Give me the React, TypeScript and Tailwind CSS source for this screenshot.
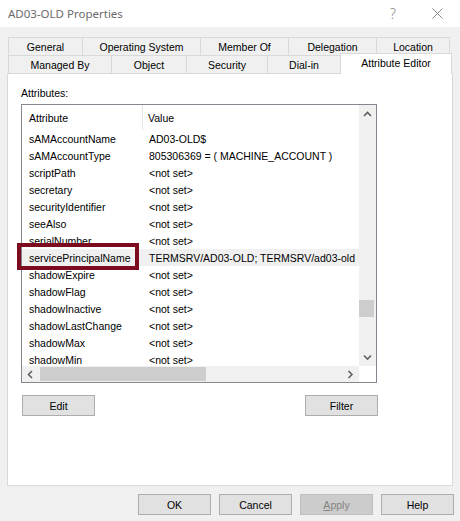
import React from 'react';

const rows: [string, string][] = [
  ['sAMAccountName', 'AD03-OLD$'],
  ['sAMAccountType', '805306369 = ( MACHINE_ACCOUNT )'],
  ['scriptPath', '<not set>'],
  ['secretary', '<not set>'],
  ['securityIdentifier', '<not set>'],
  ['seeAlso', '<not set>'],
  ['serialNumber', '<not set>'],
  ['servicePrincipalName', 'TERMSRV/AD03-OLD; TERMSRV/ad03-old'],
  ['shadowExpire', '<not set>'],
  ['shadowFlag', '<not set>'],
  ['shadowInactive', '<not set>'],
  ['shadowLastChange', '<not set>'],
  ['shadowMax', '<not set>'],
  ['shadowMin', '<not set>'],
];

const topTabs = [
  { label: 'General', w: 'w-[74px]' },
  { label: 'Operating System', w: 'w-[118px]' },
  { label: 'Member Of', w: 'w-[88px]' },
  { label: 'Delegation', w: 'w-[88px]' },
  { label: 'Location', w: 'w-[74px]' },
];

const bottomTabs = [
  { label: 'Managed By', w: 'w-[103px]' },
  { label: 'Object', w: 'w-[75px]' },
  { label: 'Security', w: 'w-[81px]' },
  { label: 'Dial-in', w: 'w-[73px]' },
];

const Chevron = ({ dir }: { dir: 'up' | 'down' | 'left' | 'right' }) => {
  const paths = {
    up: 'M1 5 L4.5 1.5 L8 5',
    down: 'M1 1.5 L4.5 5 L8 1.5',
    left: 'M5 1 L1.5 4.5 L5 8',
    right: 'M1.5 1 L5 4.5 L1.5 8',
  };
  const size = dir === 'up' || dir === 'down' ? { w: 9, h: 7 } : { w: 7, h: 9 };
  return (
    <svg width={size.w} height={size.h} viewBox={`0 0 ${size.w} ${size.h}`}>
      <path d={paths[dir]} fill="none" stroke="#606060" strokeWidth="1.6" />
    </svg>
  );
};

const WinButton = ({ label, disabled }: { label: React.ReactNode; disabled?: boolean }) => (
  <div
    className={`w-[73px] h-[21px] flex items-center justify-center border ${
      disabled ? 'bg-[#cccccc] border-[#bfbfbf] text-[#838383]' : 'bg-[#e1e1e1] border-[#adadad] text-black'
    }`}
  >
    {label}
  </div>
);

export default function App() {
  return (
    <div className="relative w-[460px] h-[521px] bg-[#f0f0f0] overflow-hidden text-[10.5px] leading-[12px] text-black font-['Liberation_Sans',Arial,sans-serif]">
      {/* title bar */}
      <div className="h-[27px] bg-white flex items-center">
        <span className="pl-[8px] text-[11.5px] text-[#6b6b6b] font-['Noto_Sans',sans-serif]">AD03-OLD Properties</span>
        <span className="ml-auto mr-[36px] text-[14px] text-[#8a8a8a] font-['Noto_Sans',sans-serif] font-light">?</span>
        <svg width="11" height="11" viewBox="0 0 11 11" className="mr-[17px]">
          <path d="M0.5 0.5 L10.5 10.5 M10.5 0.5 L0.5 10.5" stroke="#8a8a8a" strokeWidth="1" />
        </svg>
      </div>

      <div className="pl-[7px] pt-[10px]">
        {/* tabs */}
        <div className="ml-px">
          <div className="flex h-[18px]">
            {topTabs.map((t, i) => (
              <div
                key={t.label}
                className={`${t.w} flex items-center justify-center border-t border-l border-[#d9d9d9] ${
                  i === topTabs.length - 1 ? 'border-r' : ''
                }`}
              >
                {t.label}
              </div>
            ))}
          </div>
          <div className="flex h-[18px] items-end">
            {bottomTabs.map((t) => (
              <div
                key={t.label}
                className={`${t.w} h-[18px] flex items-center justify-center border-t border-l border-[#d9d9d9]`}
              >
                {t.label}
              </div>
            ))}
            <div className="relative z-10 w-[112px] h-[21px] -mb-px bg-white border-t border-l border-r border-[#d9d9d9] flex justify-center pt-[3px]">
              Attribute Editor
            </div>
          </div>
        </div>

        {/* panel */}
        <div className="w-[446px] h-[413px] bg-white border border-[#d9d9d9] pl-[13px]">
          <div className="pt-[13px] pb-[5px]">Attributes:</div>

          {/* list */}
          <div className="w-[356px] h-[279px] border border-[#828790] flex flex-col">
            <div className="flex h-[261px]">
              <div className="flex-1 overflow-hidden relative">
                <div className="flex h-[25px] items-center">
                  <div className="w-[121px] h-full flex items-center pl-[7px] border-r border-[#e5e5e5]">Attribute</div>
                  <div className="pl-[5px]">Value</div>
                </div>
                {rows.map(([a, v]) => (
                  <div
                    key={a}
                    className={`flex h-[17px] items-center whitespace-nowrap ${
                      a === 'servicePrincipalName' ? 'bg-[#f0f0f0]' : ''
                    }`}
                  >
                    <div className="w-[121px] pl-[7px] shrink-0">{a}</div>
                    <div className="pl-[6px]">{v}</div>
                  </div>
                ))}
              </div>
              {/* vertical scrollbar */}
              <div className="w-[17px] bg-[#f0f0f0] flex flex-col">
                <div className="h-[17px] flex items-center justify-center pt-px">
                  <Chevron dir="up" />
                </div>
                <div className="h-[178px]" />
                <div className="w-[15px] h-[17px] bg-[#cdcdcd]" />
                <div className="flex-1" />
                <div className="h-[17px] flex items-center justify-center">
                  <Chevron dir="down" />
                </div>
              </div>
            </div>
            {/* horizontal scrollbar */}
            <div className="flex h-[16px]">
              <div className="flex-1 bg-[#f0f0f0] flex items-center">
                <div className="w-[17px] flex justify-center">
                  <Chevron dir="left" />
                </div>
                <div className="ml-px w-[166px] h-[14px] bg-[#cdcdcd]" />
                <div className="ml-auto w-[17px] flex justify-center">
                  <Chevron dir="right" />
                </div>
              </div>
              <div className="w-[17px] bg-white" />
            </div>
          </div>

          <div className="w-[356px] mt-[12px] ml-px flex justify-between">
            <WinButton label="Edit" />
            <WinButton label="Filter" />
          </div>
        </div>

        {/* dialog buttons */}
        <div className="flex justify-end gap-[8px] pr-[6px] pt-[8px]">
          <WinButton label="OK" />
          <WinButton label="Cancel" />
          <WinButton label={<span><span className="underline">A</span>pply</span>} disabled />
          <WinButton label="Help" />
        </div>
      </div>

      {/* annotation highlight */}
      <div className="absolute left-[17px] top-[243px] w-[122px] h-[27px] border-[4px] border-[#7d0b20]" />
    </div>
  );
}
